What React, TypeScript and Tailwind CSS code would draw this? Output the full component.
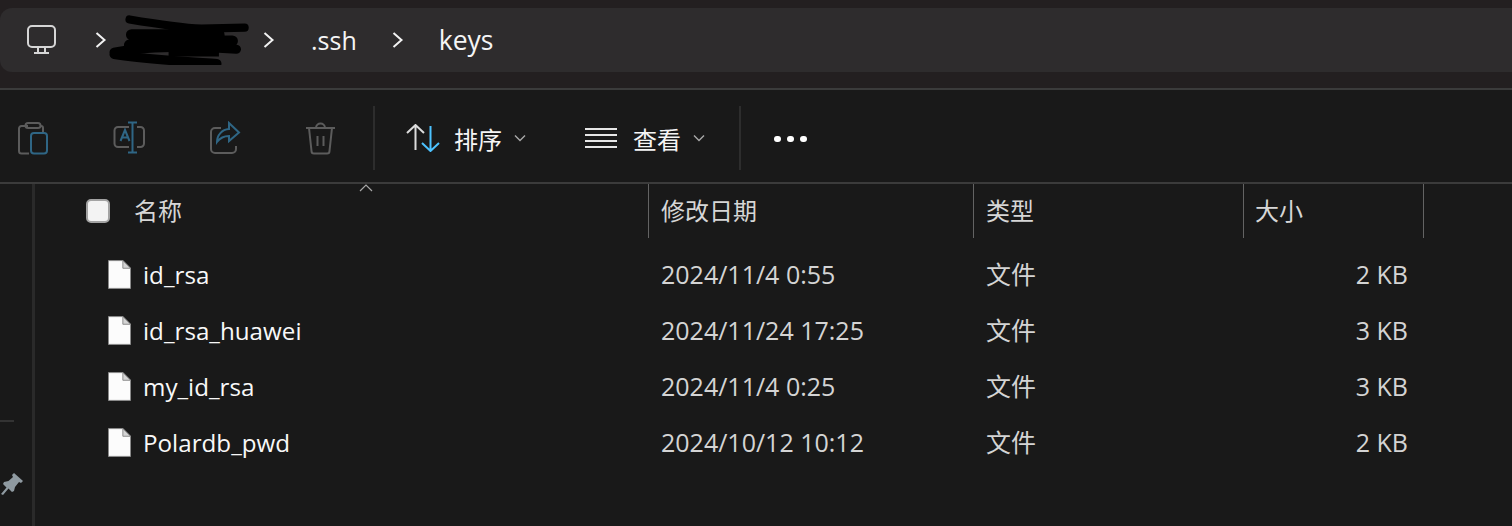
const files = [
  { name: "id_rsa", date: "2024/11/4 0:55", size: "2 KB" },
  { name: "id_rsa_huawei", date: "2024/11/24 17:25", size: "3 KB" },
  { name: "my_id_rsa", date: "2024/11/4 0:25", size: "3 KB" },
  { name: "Polardb_pwd", date: "2024/10/12 10:12", size: "2 KB" },
];

function Chevron() {
  return (
    <svg width="12" height="20" viewBox="0 0 12 20" fill="none" stroke="#f2f2f2" strokeWidth="2">
      <path d="M1.5 3l8 7-8 7" />
    </svg>
  );
}

function SmallChevron() {
  return (
    <svg width="12" height="8" viewBox="0 0 12 8" fill="none" stroke="#a8a8a8" strokeWidth="1.4">
      <path d="M1 1.5l5 5 5-5" />
    </svg>
  );
}

function FileIcon() {
  return (
    <svg width="23" height="29" viewBox="0 0 24 30" className="shrink-0">
      <path d="M.5.5h15l8 8v21H.5z" fill="#fcfcfc" stroke="#8a8a8a" />
      <path d="M15.5.5v8h8z" fill="#d4d4d4" stroke="#8a8a8a" />
    </svg>
  );
}

export default function App() {
  return (
    <div className="w-[1512px] h-[526px] overflow-hidden bg-[#191919] flex flex-col font-['Open_Sans','Noto_Sans_CJK_SC',sans-serif]">
      <div className="h-[90px] shrink-0 bg-[#231f20] pt-2 border-b-2 border-[#3b3b3b]">
        <div className="h-16 bg-[#2e2c2d] rounded-l-xl flex items-center text-[#f5f5f5] text-[25px]">
          <svg width="32" height="32" viewBox="0 0 32 32" fill="none" stroke="#d6d6d6" strokeWidth="2" className="ml-[25px]">
            <rect x="3" y="2" width="27" height="21" rx="4" />
            <path d="M13 23v5M20 23v5M9 29h15" />
          </svg>
          <div className="ml-[38px]"><Chevron /></div>
          <svg width="150" height="50" viewBox="0 0 146 48" fill="none" stroke="#000" strokeLinecap="round" className="ml-0.5">
            <path d="M20 4c30 5 50 8 70 9l42-1" strokeWidth="8" />
            <path d="M22 19h85M20 29c30-4 70-4 100-4" strokeWidth="11" />
            <path d="M5 36c30-6 80-6 119-3M5 38c30 5 70 7 100 9" strokeWidth="9" />
            <path d="M60 12h45v26H60z" fill="#000" strokeWidth="4" />
          </svg>
          <div className="ml-1"><Chevron /></div>
          <span className="ml-9 leading-none">.ssh</span>
          <div className="ml-[35px]"><Chevron /></div>
          <span className="ml-[35px] leading-none text-[26.5px]">keys</span>
        </div>
      </div>

      <div className="h-[94px] shrink-0 border-b-2 border-[#3b3b3b] flex items-center pl-[17px] pt-1">
        <div className="flex items-center gap-16">
          <svg width="32" height="34" viewBox="0 0 32 34" fill="none" strokeWidth="2">
            <path d="M11 5H4.500a2.500 2.500 0 0 0-2.500 2.500V30a2.500 2.500 0 0 0 2.500 2.500H12M23 5h1a2 2 0 0 1 2 2v4" stroke="#5c5c5c" />
            <rect x="8.500" y="2" width="15" height="5" rx="2.500" stroke="#5c5c5c" />
            <rect x="14" y="12" width="16" height="20.500" rx="3" stroke="#2f6685" />
          </svg>
          <svg width="32" height="34" viewBox="0 0 32 34" fill="none" strokeWidth="2">
            <path d="M16 6H5a3.500 3.500 0 0 0-3.500 3.500v13A3.500 3.500 0 0 0 5 26h11M24 6h3.500A3.500 3.500 0 0 1 31 9.500v13a3.500 3.500 0 0 1-3.500 3.500H24" stroke="#5c5c5c" />
            <path d="M15 1.500h9M19.500 1.500v30M15 31.500h9" stroke="#2f6685" />
            <path d="M7.500 20l4.500-11 4.500 11M9 16.500h6" stroke="#2f6685" />
          </svg>
          <svg width="32" height="34" viewBox="0 0 32 34" fill="none" strokeWidth="2">
            <path d="M12 7H6a4 4 0 0 0-4 4v17a4 4 0 0 0 4 4h17a4 4 0 0 0 4-4v-3" stroke="#5c5c5c" />
            <path d="M20 2l10 9.500L20 20v-5c-6 0-9 2-12 6 0-7 5-12.500 12-13z" stroke="#2f6685" />
          </svg>
          <svg width="32" height="34" viewBox="0 0 32 34" fill="none" stroke="#5c5c5c" strokeWidth="2">
            <path d="M1 7h29M11 7c0-6 9-6 9 0M4 7l2.500 23a2.500 2.500 0 0 0 2.500 2.500h13a2.500 2.500 0 0 0 2.500-2.500L27 7M12.500 15v10M18.500 15v10" />
          </svg>
        </div>
        <div className="ml-9 w-0.5 h-16 bg-[#2d2d2d]" />

        <svg width="34" height="28" viewBox="0 0 34 28" fill="none" strokeWidth="2" className="ml-[31px]">
          <path d="M1 9l8.500-8L18 9M9.500 1v25" stroke="#dcdcdc" />
          <path d="M16 19l8.500 8L33 19M24.500 27V2" stroke="#4cc2ff" />
        </svg>
        <span className="ml-[14px] pt-1 text-[24px] leading-none text-[#f5f5f5]">排序</span>
        <div className="ml-3"><SmallChevron /></div>

        <svg width="32" height="22" viewBox="0 0 32 22" fill="none" stroke="#e6e6e6" strokeWidth="2" className="ml-[59px]">
          <path d="M0 2h32M0 8h32M0 14h32M0 20h32" />
        </svg>
        <span className="ml-4 pt-1 text-[24px] leading-none text-[#f5f5f5]">查看</span>
        <div className="ml-3"><SmallChevron /></div>
        <div className="ml-[34px] w-0.5 h-16 bg-[#2d2d2d]" />

        <div className="ml-[33px] mt-0.5 flex gap-[6.500px]">
          <div className="size-[6.500px] rounded-full bg-white" />
          <div className="size-[6.500px] rounded-full bg-white" />
          <div className="size-[6.500px] rounded-full bg-white" />
        </div>
      </div>

      <div className="flex-1 flex min-h-0">
        <div className="w-[35px] shrink-0 border-r-[3px] border-[#2a2a2a] flex flex-col">
          <div className="mt-[236px] w-3.5 h-0.5 bg-[#333333]" />
          <svg width="24" height="24" viewBox="0 0 24 24" fill="#8f9aa1" className="mt-[50px]">
            <path d="M14 1l9 8-2 2-2-1-4 5-1 4-2 1-3.500-3.500L3 23l-2-1 5.500-6.500L3 12l1-2 4.500-1L13 5l-1-2z" />
          </svg>
        </div>

        <div className="flex-1 min-w-0">
          <div className="grid grid-cols-[613px_325px_270px_181px] h-[54px] text-[#d6d6d6] text-[24px] relative">
            <div className="flex items-center pl-[51px]">
              <div className="size-6 rounded-[5px] bg-[#f3f3f3] border-2 border-[#a3a3a3]" />
              <span className="ml-6 leading-none">名称</span>
            </div>
            <div className="flex items-center pl-3 border-l border-[#636363]">修改日期</div>
            <div className="flex items-center pl-3 border-l border-[#636363]">类型</div>
            <div className="flex items-center pl-[11px] border-x border-[#636363]">大小</div>
            <svg width="14" height="8" viewBox="0 0 14 8" fill="none" stroke="#a8a8a8" strokeWidth="1.200" className="absolute left-[324px] top-0">
              <path d="M1 7l6-6 6 6" />
            </svg>
          </div>
          <div className="pt-[9px]">
            {files.map((f) => (
              <div key={f.name} className="grid grid-cols-[613px_325px_270px_165px] h-14 items-center text-[25px] text-[#d4d4d4]">
                <div className="flex items-center pl-[73px]">
                  <FileIcon />
                  <span className="ml-3 text-[24.2px] text-[#f8f8f8]">{f.name}</span>
                </div>
                <div className="pl-[13px]">{f.date}</div>
                <div className="pl-[13px]">文件</div>
                <div className="text-right">{f.size}</div>
              </div>
            ))}
          </div>
        </div>
      </div>
    </div>
  );
}
